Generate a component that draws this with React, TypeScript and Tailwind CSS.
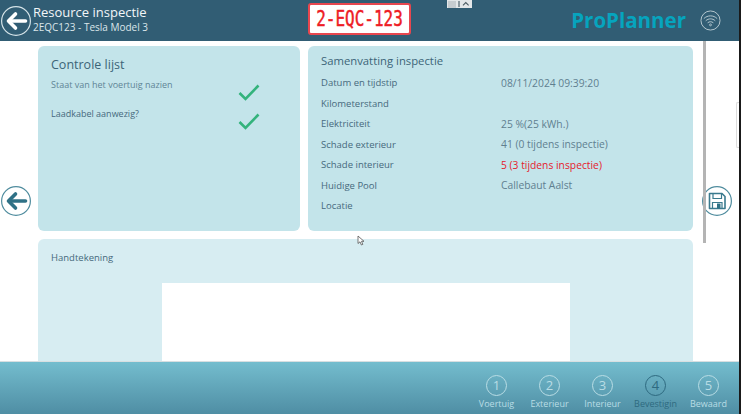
const font = { fontFamily: '"Open Sans", sans-serif' };

function ArrowCircle({ dark }: { dark?: boolean }) {
  const c = dark ? "#2f7186" : "#ffffff";
  return (
    <svg width="30" height="30" viewBox="0 0 30 30" fill="none">
      <circle cx="15" cy="15" r="14.4" stroke={dark ? "#4f8c9e" : "#d5e3e8"} strokeWidth="1.2" />
      <path d="M24.5 15H9" stroke={c} strokeWidth="3.6" strokeLinecap="round" />
      <path d="M14.5 8L7.5 15L14.5 22" stroke={c} strokeWidth="3.6" strokeLinecap="round" strokeLinejoin="round" />
    </svg>
  );
}

function SaveCircle() {
  return (
    <svg width="30" height="30" viewBox="0 0 30 30" fill="none">
      <circle cx="15" cy="15" r="14.4" stroke="#4f8c9e" strokeWidth="1.2" />
      <path d="M7.5 7.5H20L23 10.5V22.5H7.5Z" stroke="#3a7a8e" strokeWidth="1.6" strokeLinejoin="round" />
      <path d="M11 8V12.5H19.5V8" stroke="#3a7a8e" strokeWidth="1.2" />
      <path d="M10.5 22V16.5H20V22" stroke="#3a7a8e" strokeWidth="1.2" />
      <rect x="15" y="17.5" width="3.5" height="5" fill="#2f7186" />
    </svg>
  );
}

function Wifi() {
  return (
    <svg width="21" height="21" viewBox="0 0 22 22" fill="none" stroke="#b9cbd2">
      <circle cx="11" cy="11" r="10" strokeWidth="1" />
      <path d="M4 9C8 5.2 14 5.2 18 9" strokeWidth="1" />
      <path d="M6 11.3C9 8.6 13 8.6 16 11.3" strokeWidth="1" />
      <path d="M8 13.4C10 11.9 12 11.9 14 13.4" strokeWidth="1" />
      <circle cx="11" cy="15.6" r="1" strokeWidth="0.9" />
    </svg>
  );
}

function Check() {
  return (
    <svg width="22" height="17" viewBox="0 0 22 17" fill="none">
      <path d="M1.5 9L7.5 15L20.5 1.5" stroke="#33b37c" strokeWidth="2.6" />
    </svg>
  );
}

const rows: [string, string, boolean?][] = [
  ["Datum en tijdstip", "08/11/2024 09:39:20"],
  ["Kilometerstand", ""],
  ["Elektriciteit", "25 %(25 kWh.)"],
  ["Schade exterieur", "41 (0 tijdens inspectie)"],
  ["Schade interieur", "5 (3 tijdens inspectie)", true],
  ["Huidige Pool", "Callebaut Aalst"],
  ["Locatie", ""],
];

const steps = ["Voertuig", "Exterieur", "Interieur", "Bevestigin", "Bewaard"];

export default function App() {
  return (
    <div style={font} className="relative flex h-[414px] w-[741px] flex-col overflow-hidden bg-white">
      <header className="flex h-[41px] shrink-0 items-center bg-[#315d74] pr-[20px] pl-px">
        <ArrowCircle />
        <div className="ml-[2px] w-[275px] pb-[5px] text-white">
          <div className="text-[13px] leading-[18px] text-[#f2f6f8]">Resource inspectie</div>
          <div className="text-[10px] leading-[13px] text-[#dbe6ea]">2EQC123 - Tesla Model 3</div>
        </div>
        <div className="mb-[4px] flex h-[32px] w-[103px] items-center justify-center rounded-[3px] border-2 border-[#e8474f] bg-white">
          <span className="origin-center scale-y-[1.3] font-['DejaVu_Sans_Mono',monospace] text-[16px] leading-none text-[#ee1c25] [-webkit-text-stroke:0.35px_#ee1c25]">
            2-EQC-123
          </span>
        </div>
        <div className="ml-auto text-[20.5px] font-bold text-[#06a4be]">ProPlanner</div>
        <div className="ml-[14px] flex"><Wifi /></div>
      </header>

      <main className="flex min-h-0 flex-1">
        <div className="flex w-[38px] shrink-0 items-center pl-px">
          <ArrowCircle dark />
        </div>
        <div className="flex w-[655px] shrink-0 flex-col gap-2 pt-[5px]">
          <div className="flex h-[185px] shrink-0 gap-2">
            <section className="w-[262px] rounded-[6px] bg-[#c3e4ea] px-[13px] pt-[10px]">
              <h2 className="text-[12.5px] leading-[18px] text-[#3c6478]">Controle lijst</h2>
              <div className="relative mt-[4px] text-[9px] leading-[13px] text-[#5f8496]">Staat van het voertuig nazien
                <span className="absolute top-[6px] left-[187px]"><Check /></span>
              </div>
              <div className="relative mt-[16px] text-[9px] leading-[13px] font-medium text-[#46697d]">Laadkabel aanwezig?
                <span className="absolute top-[6px] left-[187px]"><Check /></span>
              </div>
            </section>
            <section className="w-[385px] rounded-[6px] bg-[#c3e4ea] px-[13px] pt-[6px]">
              <h2 className="text-[11.3px] leading-[18px] font-medium text-[#3c6478]">Samenvatting inspectie</h2>
              <div className="mt-[3px] flex flex-col">
                {rows.map(([label, value, danger]) => (
                  <div key={label} className="flex h-[20.5px] items-center">
                    <div className="w-[180px] text-[9.5px] font-medium text-[#46697d]">{label}</div>
                    <div className={danger ? "text-[10.3px] text-[#e5202c]" : "text-[10.3px] text-[#5f7f90]"}>{value}</div>
                  </div>
                ))}
              </div>
            </section>
          </div>
          <section className="min-h-0 flex-1 rounded-t-[6px] bg-[#d7edf2] px-[13px] pt-[12px]">
            <h3 className="text-[9.5px] leading-[13px] font-medium text-[#46697d]">Handtekening</h3>
            <div className="mt-[19px] ml-[111px] h-[90px] w-[408px] bg-white" />
          </section>
        </div>
        <div className="flex flex-1 items-center pl-[9px]">
          <SaveCircle />
        </div>
      </main>

      <footer className="flex h-[53px] shrink-0 justify-end gap-0 border-t border-[#d8dfe1] bg-gradient-to-b from-[#74bdce] to-[#4f8ea4] pt-[13px] pr-[6px]">
        {steps.map((s, i) => {
          const active = i === 3;
          return (
            <div key={s} className={active ? "flex w-[53px] flex-col items-center text-[#2e6a80]" : "flex w-[53px] flex-col items-center text-[#b9dde5]"}>
              <div className={active ? "flex h-[21px] w-[21px] items-center justify-center rounded-full border border-[#2e6a80] text-[13px] leading-none" : "flex h-[21px] w-[21px] items-center justify-center rounded-full border border-[#b9dde5] text-[13px] leading-none"}>{i + 1}</div>
              <div className="mt-[2px] text-[9px] leading-[12px]">{s}</div>
            </div>
          );
        })}
      </footer>

      <div className="absolute top-[41px] left-[703px] h-[202px] w-[3px] bg-[#b4b4b4]" />
      <div className="absolute top-[102px] left-[736px] h-[46px] w-[3px] rounded-l-[2px] border-y border-l border-[#dcdcdc]" />
      <div className="absolute top-0 right-0 h-full w-[2px] bg-[#1a1a1a]" />
      <div className="absolute top-0 left-[447px] flex h-[8px] w-[25px] items-center gap-[2px] bg-[#e3e7e9] pr-[2px] pl-px">
        <div className="h-[7px] w-[8px] bg-[#c6ccd0]" />
        <div className="h-[6px] w-[3px] bg-[#8a979e]" />
        <svg className="ml-auto" width="8" height="6" viewBox="0 0 8 6" fill="none"><path d="M1 4.5L4 1.5L7 4.5" stroke="#4a5a62" strokeWidth="1.1" /></svg>
      </div>
      <svg className="absolute top-[235px] left-[357px]" width="8" height="11" viewBox="0 0 8 11" fill="#fff" stroke="#555" strokeWidth="0.8">
        <path d="M1 1V8.5L3 6.8L4.4 10L5.8 9.4L4.5 6.3H7Z" />
      </svg>
    </div>
  );
}
